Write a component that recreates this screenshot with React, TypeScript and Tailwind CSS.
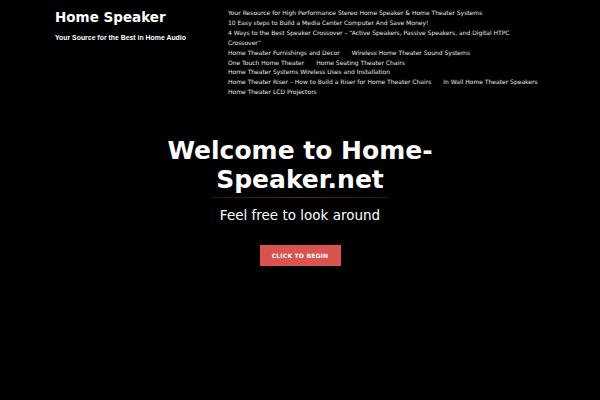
const navItems = [
  "Your Resource for High Performance Stereo Home Speaker & Home Theater Systems",
  "10 Easy steps to Build a Media Center Computer And Save Money!",
  "4 Ways to the Best Speaker Crossover – “Active Speakers, Passive Speakers, and Digital HTPC Crossover”",
  "Home Theater Furnishings and Decor",
  "Wireless Home Theater Sound Systems",
  "One Touch Home Theater",
  "Home Seating Theater Chairs",
  "Home Theater Systems Wireless Uses and Installation",
  "Home Theater Riser – How to Build a Riser for Home Theater Chairs",
  "In Wall Home Theater Speakers",
  "Home Theater LCD Projectors",
];

export default function App() {
  return (
    <div className="w-[600px] h-[400px] bg-black text-white overflow-hidden font-['DejaVu_Sans',sans-serif]">
      {/* Header */}
      <div className="flex pt-[7px] h-[98px]">
        <div className="w-[228px] pl-[55px] shrink-0 whitespace-nowrap">
          <h1 className="text-[13.5px] leading-[20px] font-bold">Home Speaker</h1>
          <p className="mt-[6px] text-[6.9px] leading-[10px] font-bold font-['Liberation_Sans',sans-serif]">
            Your Source for the Best in Home Audio
          </p>
        </div>
        <nav className="w-[316px] pt-[1px] flex flex-wrap content-start gap-x-[12px] text-[6px] leading-[9.9px] text-[#e8e8e8]">
          {navItems.map((item) => (
            <a key={item} className="cursor-pointer">
              {item}
            </a>
          ))}
        </nav>
      </div>

      {/* Hero */}
      <div className="flex flex-col items-center mt-[38px]">
        <h2 className="w-[300px] text-center text-[25px] leading-[29px] font-bold">Welcome to Home-Speaker.net</h2>
        <div className="w-[176px] h-px bg-gradient-to-r from-[#2a1216] via-[#5a2530] to-[#2a1216] mt-[3px]" />
        <p className="mt-[8px] text-[13.5px] leading-[18px]">Feel free to look around</p>
        <button className="mt-[21px] w-[81px] h-[21px] bg-[#d9534f] text-[6px] font-bold tracking-[0.2px] text-white">
          CLICK TO BEGIN
        </button>
      </div>
    </div>
  );
}
